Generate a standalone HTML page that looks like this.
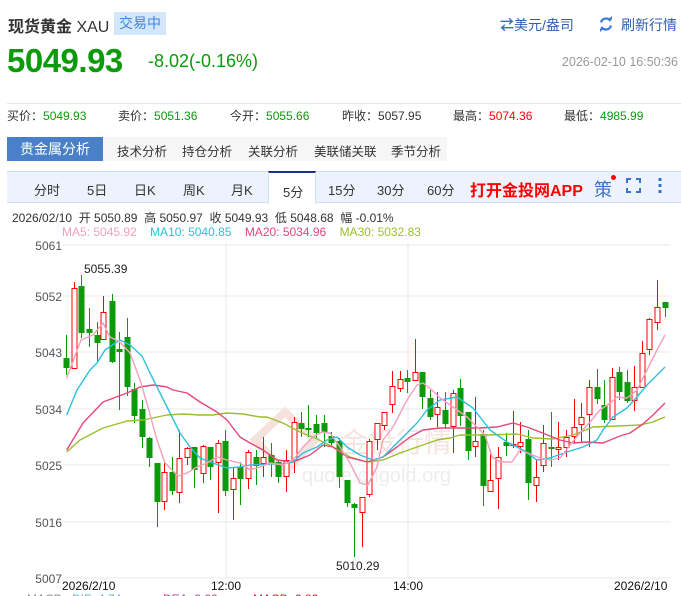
<!DOCTYPE html>
<html><head><meta charset="utf-8"><style>
*{margin:0;padding:0;box-sizing:border-box}
body{width:681px;height:596px;overflow:hidden;background:#fff;font-family:"Liberation Sans","Noto Sans CJK SC",sans-serif;position:relative;color:#333}
.a{position:absolute;white-space:nowrap}
</style></head><body>
<div class="a" style="left:8px;top:13px;font-size:16px;color:#333;font-weight:bold">现货黄金 <span style="font-weight:normal">XAU</span></div>
<div class="a" style="left:114px;top:12px;width:52px;height:23px;background:#d4e7fa;color:#3d86d6;font-size:14px;line-height:23px;text-align:center">交易中</div>
<div class="a" style="left:500px;top:15px;font-size:14px;color:#2f5fb0"><span style="color:#3b6fc0;font-weight:bold">⇄</span>美元/盎司</div>
<svg class="a" style="left:598px;top:16px" width="16" height="16" viewBox="0 0 16 16"><path d="M3 6.5A5.2 5.2 0 0 1 12.5 5" fill="none" stroke="#3b7ad6" stroke-width="2.2"/><path d="M13 9.5A5.2 5.2 0 0 1 3.5 11" fill="none" stroke="#3b7ad6" stroke-width="2.2"/><path d="M10 3.5l4 0 0-3.5z" fill="#3b7ad6"/><path d="M6 12.5l-4 0 0 3.5z" fill="#3b7ad6"/></svg>
<div class="a" style="left:621px;top:15px;font-size:14px;color:#2f5fb0">刷新行情</div>
<div class="a" style="left:7px;top:42px;font-size:33px;font-weight:bold;color:#0a9a0a;letter-spacing:-0.5px">5049.93</div>
<div class="a" style="left:148px;top:51px;font-size:18px;color:#0a9a0a">-8.02(-0.16%)</div>
<div class="a" style="right:3px;top:55px;font-size:12.5px;color:#999">2026-02-10 16:50:36</div>
<div class="a" style="left:7px;top:103px;width:674px;height:1px;background:#e6e6e6"></div>
<div class="a" style="left:7px;top:107px;font-size:12px;color:#333">买价：<span style="color:#0a9a0a">5049.93</span></div>
<div class="a" style="left:118px;top:107px;font-size:12px">卖价：<span style="color:#0a9a0a">5051.36</span></div>
<div class="a" style="left:230px;top:107px;font-size:12px">今开：<span style="color:#0a9a0a">5055.66</span></div>
<div class="a" style="left:342px;top:107px;font-size:12px">昨收：<span>5057.95</span></div>
<div class="a" style="left:453px;top:107px;font-size:12px">最高：<span style="color:#f00">5074.36</span></div>
<div class="a" style="left:564px;top:107px;font-size:12px">最低：<span style="color:#0a9a0a">4985.99</span></div>
<div class="a" style="left:7px;top:137px;width:440px;height:24px;background:#f6f6f6"></div>
<div class="a" style="left:7px;top:137px;width:96px;height:24px;background:#4a80c8;color:#fff;font-size:14px;line-height:24px;text-align:center">贵金属分析</div>
<div class="a" style="left:117px;top:141px;font-size:12.5px;color:#333;word-spacing:0">技术分析</div>
<div class="a" style="left:182px;top:141px;font-size:12.5px">持仓分析</div>
<div class="a" style="left:248px;top:141px;font-size:12.5px">关联分析</div>
<div class="a" style="left:314px;top:141px;font-size:12.5px">美联储关联</div>
<div class="a" style="left:391px;top:141px;font-size:12.5px">季节分析</div>
<div class="a" style="left:7px;top:171px;width:674px;height:32px;background:#edf3fc;border-top:1px solid #d3deef;border-bottom:1px solid #d3deef"></div>
<div class="a" style="left:268px;top:171px;width:48px;height:33px;background:#fff;border-top:2px solid #1a2f8a;border-left:1px solid #d3deef;border-right:1px solid #d3deef"></div>
<div class="a" style="left:0;top:180px;font-size:13px;color:#333">
<span class="a" style="left:34px">分时</span><span class="a" style="left:87px">5日</span><span class="a" style="left:134px">日K</span><span class="a" style="left:183px">周K</span><span class="a" style="left:231px">月K</span><span class="a" style="left:283px;top:2px">5分</span><span class="a" style="left:328px">15分</span><span class="a" style="left:377px">30分</span><span class="a" style="left:427px">60分</span></div>
<div class="a" style="left:470px;top:177px;font-size:16px;font-weight:bold;color:#f00">打开金投网APP</div>
<div class="a" style="left:594px;top:176px;font-size:18px;color:#3a74c8">策</div>
<div class="a" style="left:611px;top:175px;width:5px;height:5px;border-radius:50%;background:#f00"></div>
<svg class="a" style="left:626px;top:178px" width="15" height="15"><path d="M1 5V1h4M10 1h4v4M14 10v4h-4M5 14H1v-4" fill="none" stroke="#3a74c8" stroke-width="2"/></svg>
<svg class="a" style="left:658px;top:178px" width="4" height="15"><rect x="0.5" y="0" width="3" height="3" fill="#3a74c8"/><rect x="0.5" y="6" width="3" height="3" fill="#3a74c8"/><rect x="0.5" y="12" width="3" height="3" fill="#3a74c8"/></svg>
<div class="a" style="left:12px;top:209px;font-size:12px;color:#333">2026/02/10&nbsp; 开 5050.89&nbsp; 高 5050.97&nbsp; 收 5049.93&nbsp; 低 5048.68&nbsp; 幅 -0.01%</div>
<div class="a" style="left:62px;top:225px;font-size:12px"><span style="color:#f5a0bb">MA5: 5045.92</span>&nbsp;&nbsp;&nbsp; <span style="color:#2ec0dd">MA10: 5040.85</span>&nbsp;&nbsp;&nbsp; <span style="color:#e8457c">MA20: 5034.96</span>&nbsp;&nbsp;&nbsp; <span style="color:#9bbf2a">MA30: 5032.83</span></div>
<svg id="ch" class="a" style="left:0;top:0" width="681" height="596"></svg>
<script>
var s='';
var gy=[245,296,352,409,465,522,578],gl=['5061','5052','5043','5034','5025','5016','5007'];
for(var i=0;i<7;i++){s+='<line x1="62" y1="'+gy[i]+'" x2="670" y2="'+gy[i]+'" stroke="#e8e8e8"/>';s+='<text x="62" y="'+(gy[i]+5)+'" text-anchor="end" font-size="12" fill="#555" font-family="Liberation Sans">'+gl[i]+'</text>';}
s+='<line x1="226" y1="243" x2="226" y2="578" stroke="#e8e8e8"/><line x1="408" y1="243" x2="408" y2="578" stroke="#e8e8e8"/>';
s+='<text x="340" y="452" font-size="28" fill="#f6e4e0" font-family="Noto Sans CJK SC">金投行情</text><text x="302" y="482" font-size="20" fill="#ededed" font-family="Liberation Sans">quote.cngold.org</text>';
s+='<path d="M255 440l30-28 30 28-30 32z" fill="none" stroke="#f6e2dd" stroke-width="8"/>';
var C=[
[66,'g',358,368,335,375],[74,'r',288,369,282,369],[81,'g',286,333,275,338],[89,'g',329,333,308,347],[97,'g',335,343,322,363],[103,'r',312,340,296,340],[112,'g',301,362,294,363],[119,'g',349,352,332,410],[127,'g',337,387,318,396],[134,'g',389,416,383,423],[142,'g',409,437,400,448],[149,'g',438,458,437,467],[157,'g',463,502,463,527],[164,'r',472,502,462,510],[172,'g',472,491,457,495],[179,'r',458,493,430,503],[187,'r',448,458,447,465],[194,'g',447,470,447,488],[203,'r',446,474,445,483],[210,'g',447,467,447,480],[218,'r',443,463,440,513],[225,'g',441,491,430,496],[233,'r',478,490,467,520],[240,'g',467,479,462,505],[248,'r',452,479,450,489],
[256,'g',457,466,450,485],[263,'r',457,464,437,477],[271,'g',455,463,443,477],[278,'g',462,477,460,483],[286,'r',460,477,450,492],[294,'r',422,461,417,473],[301,'g',423,429,412,437],[308,'g',428,430,405,437],[316,'g',424,433,415,438],[324,'g',423,432,415,447],[331,'g',436,443,432,447],[339,'g',441,477,438,488],[347,'g',480,503,480,507],[354,'g',504,508,503,557],[362,'r',497,513,497,547],[369,'r',441,495,439,497],[377,'r',423,440,423,450],[384,'r',412,426,412,430],[392,'r',386,405,371,413],[400,'r',379,389,371,392],[407,'g',378,382,370,393],[415,'r',372,381,339,381],[422,'g',372,397,372,409],[430,'g',398,417,390,420],[437,'r',407,415,392,427],[445,'g',410,424,392,429],
[453,'r',393,427,390,453],[460,'g',388,416,379,426],[468,'g',412,451,412,460],[475,'r',441,447,397,457],[483,'g',434,486,430,506],[490,'r',480,492,450,492],[498,'r',457,479,447,509],[506,'g',442,446,433,456],[513,'r',444,445,411,448],[520,'r',442,447,422,453],[528,'g',439,483,430,500],[536,'r',477,486,460,502],[543,'r',443,466,425,472],[551,'g',447,449,412,467],[558,'r',447,450,422,460],[566,'r',437,448,430,457],[574,'r',427,437,399,443],[581,'r',417,425,403,443],[589,'r',387,415,380,447],[597,'g',387,399,369,404],[604,'g',405,420,380,423],[612,'r',377,420,368,420],[619,'g',372,392,367,400],[627,'g',382,401,370,403],[634,'r',387,401,366,411],[642,'r',353,388,341,388],[649,'r',319,350,318,355],[657,'r',307,323,280,330],[665,'g',302,308,302,317]];
var G=[];
C.forEach(function(c){var x=c[0],col=c[1]=='g'?'#0a9a0a':'#f00';var t=c[2],b=Math.max(c[3],t+1.5);
s+='<line x1="'+(x+.5)+'" y1="'+c[4]+'" x2="'+(x+.5)+'" y2="'+t+'" stroke="'+col+'"/><line x1="'+(x+.5)+'" y1="'+b+'" x2="'+(x+.5)+'" y2="'+c[5]+'" stroke="'+col+'"/>';
if(c[1]=='g')s+='<rect x="'+(x-2.5)+'" y="'+t+'" width="6" height="'+(b-t)+'" fill="'+col+'"/>';
else s+='<rect x="'+(x-2)+'" y="'+(t+.5)+'" width="5" height="'+(b-t-1<1?1:b-t-1)+'" fill="#fff" stroke="'+col+'"/>';});
function L(p,c){s+='<polyline points="'+p+'" fill="none" stroke="'+c+'" stroke-width="1.4" stroke-linejoin="round"/>';}
L('66.7,452 80,440 103,428 127,421 143,420 167,415 183,414 200,415 213,415 227,413 243,414 260,417 267,417 283,423 300,432 317,439 333,447 350,457 367,462 383,460 400,453 417,447 437,440 450,438 460,435 487,435 517,434 533,438 553,439 573,435 593,427 617,426 640,425 653,422 665,417','#9bbf2a');
L('66.7,450 83,423 103,402 127,393 140,387 153,385 167,387 173,390 187,393 200,402 217,412 227,420 240,437 250,443 263,450 277,460 293,462 310,455 323,445 333,447 347,457 367,462 383,457 397,447 410,437 423,430 440,428 460,428 480,428 497,427 513,423 527,427 540,432 560,440 573,443 587,442 603,443 620,436 630,433 643,424 653,415 665,403','#e8457c');
L('66.7,415 77,390 90,370 97,363 105,350 120,340 130,345 142,356 150,373 160,393 170,413 180,433 190,447 200,458 213,463 227,468 240,467 250,465 270,464 283,464 293,462 303,453 317,447 327,440 337,437 347,447 360,455 373,460 383,457 393,447 407,433 417,423 427,410 440,400 457,397 473,408 490,430 507,442 523,450 537,460 550,458 567,452 583,447 597,440 603,430 613,417 627,408 637,397 647,385 657,375 665,367','#2ec0dd');
L('66.7,378 81,340 93,335 103,323 110,337 120,342 130,353 140,380 148,407 157,440 165,463 178,476 187,473 197,467 207,463 217,457 227,460 240,463 250,470 260,467 270,463 283,465 293,460 303,447 313,437 322,432 330,433 340,447 350,463 360,483 368,485 377,467 383,440 393,427 407,400 417,385 423,383 432,390 440,398 453,407 467,417 477,427 485,435 492,457 500,462 512,462 520,450 528,453 540,458 550,460 560,458 570,445 580,433 590,422 600,410 610,403 617,397 627,398 637,390 647,370 657,350 665,335','#f5a0bb');
s+='<text x="84" y="273" font-size="12" fill="#222" font-family="Liberation Sans">5055.39</text><text x="336" y="570" font-size="12" fill="#222" font-family="Liberation Sans">5010.29</text>';
s+='<text x="62" y="590" font-size="12" fill="#111" font-family="Liberation Sans">2026/2/10</text><text x="211" y="590" font-size="12" fill="#111" font-family="Liberation Sans">12:00</text><text x="393" y="590" font-size="12" fill="#111" font-family="Liberation Sans">14:00</text><text x="614" y="590" font-size="12" fill="#111" font-family="Liberation Sans">2026/2/10</text>';
s+='<text x="27" y="603" font-size="12" fill="#888" font-family="Liberation Sans">MACD</text><text x="72" y="603" font-size="12" fill="#2ec0dd" font-family="Liberation Sans">DIF: 4.74</text><text x="163" y="603" font-size="12" fill="#d21fc0" font-family="Liberation Sans">DEA: 3.02</text><text x="253" y="603" font-size="12" fill="#e00" font-family="Liberation Sans">MACD: 2.82</text>';
document.getElementById('ch').innerHTML=s;
</script>
</body></html>
